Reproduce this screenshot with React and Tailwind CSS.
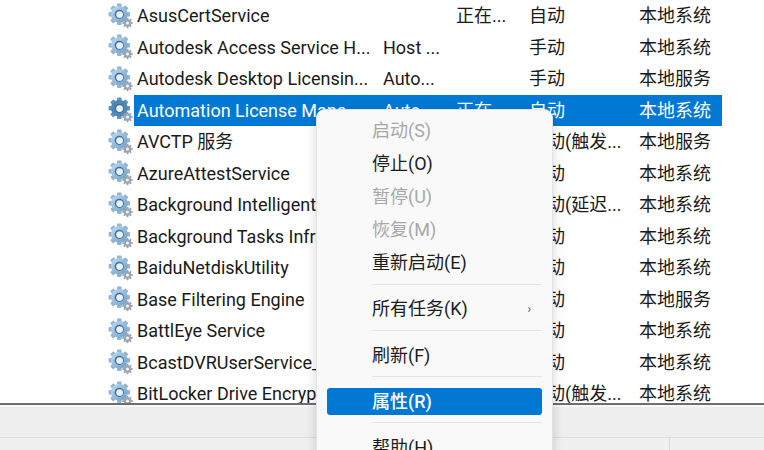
import React from "react";

const services = [
  { name: "AsusCertService", desc: "", status: "正在...", start: "自动", logon: "本地系统" },
  { name: "Autodesk Access Service H...", desc: "Host ...", status: "", start: "手动", logon: "本地系统" },
  { name: "Autodesk Desktop Licensin...", desc: "Auto...", status: "", start: "手动", logon: "本地服务" },
  { name: "Automation License Mana...", desc: "Auto...", status: "正在...", start: "自动", logon: "本地系统", selected: true },
  { name: "AVCTP 服务", desc: "", status: "", start: "手动(触发...", logon: "本地服务" },
  { name: "AzureAttestService", desc: "", status: "", start: "手动", logon: "本地系统" },
  { name: "Background Intelligent Tra...", desc: "", status: "", start: "自动(延迟...", logon: "本地系统" },
  { name: "Background Tasks Infrastr...", desc: "", status: "", start: "自动", logon: "本地系统" },
  { name: "BaiduNetdiskUtility", desc: "", status: "", start: "手动", logon: "本地系统" },
  { name: "Base Filtering Engine", desc: "", status: "", start: "自动", logon: "本地服务" },
  { name: "BattlEye Service", desc: "", status: "", start: "手动", logon: "本地系统" },
  { name: "BcastDVRUserService_", desc: "", status: "", start: "手动", logon: "本地系统" },
  { name: "BitLocker Drive Encryption", desc: "", status: "", start: "手动(触发...", logon: "本地系统" },
];

const teeth = [0, 45, 90, 135, 180, 225, 270, 315];

function GearIcon({ selected }) {
  return (
    <svg width="26" height="26" viewBox="0 0 26 26" className="shrink-0">
      <defs>
        <linearGradient id="gearBlue" x1="0" y1="0" x2="1" y2="1">
          <stop offset="0" stopColor="#c4dbee" />
          <stop offset="1" stopColor="#6a9cc6" />
        </linearGradient>
      </defs>
      {teeth.map((a) => (
        <rect key={a} x="9" y="0.6" width="4.6" height="5" rx="0.8" fill={selected ? "#5f93c0" : "#8fb6d6"} transform={`rotate(${a} 11.3 11.3)`} />
      ))}
      <circle cx="11.3" cy="11.3" r="8.4" fill={selected ? "#4f86b5" : "url(#gearBlue)"} />
      <circle cx="11.3" cy="11.3" r="4.6" fill="#3f709c" />
      <circle cx="11.6" cy="11.6" r="3.4" fill="#e8f1f8" />
      {teeth.map((a) => (
        <rect key={a} x="18.6" y="14.8" width="1.8" height="2.6" fill="#98a4ae" transform={`rotate(${a} 19.5 20)`} />
      ))}
      <circle cx="19.5" cy="20" r="3.7" fill="#9aa6b0" />
      <circle cx="19.5" cy="20" r="1.5" fill="#f3f5f7" />
    </svg>
  );
}

function ServiceRow({ name, desc, status, start, logon, selected }) {
  return (
    <div className="flex items-center h-[31.5px] pl-[108px]">
      <GearIcon selected={selected} />
      <div className={`flex items-center h-full w-[588px] whitespace-nowrap ${selected ? "bg-[#0078d4] text-white" : "text-[#1a1a1a]"}`}>
        <span className="w-[249px] pl-[3px] overflow-hidden">{name}</span>
        <span className="w-[73px]">{desc}</span>
        <span className="w-[73px]">{status}</span>
        <span className="w-[110px] overflow-hidden">{start}</span>
        <span>{logon}</span>
      </div>
    </div>
  );
}

function MenuItem({ label, disabled, active, arrow }) {
  return (
    <div
      className={`flex items-center justify-between h-[27px] mx-[10px] pl-[45px] pr-[11px] rounded-[3px] ${
        active ? "bg-[#0078d4] text-white font-medium" : disabled ? "text-[#a8a8a8]" : "text-[#1c1c1c]"
      }`}
    >
      <span>{label}</span>
      {arrow && <span className="text-[12px] text-[#555]">›</span>}
    </div>
  );
}

function Separator() {
  return <div className="h-px mt-[1.5px] mb-[4.8px] bg-[#e4e4e4] ml-[55px] mr-[11px]" />;
}

export default function App() {
  return (
    <div className="relative h-[450px] w-[764px] overflow-hidden bg-white text-[18px] font-['Roboto','Noto_Sans_CJK_SC',sans-serif]">
      <div className="h-[403px] overflow-hidden">
        {services.map((s) => (
          <ServiceRow key={s.name} {...s} />
        ))}
      </div>

      {/* status area */}
      <div className="h-[2px] bg-[#6e6e6e]" />
      <div className="h-[32px] bg-[#eeeeee] border-t-2 border-[#f8f8f8]" />
      <div className="h-px bg-[#dcdcdc]" />
      <div className="flex h-[12px] bg-[#f0f0f0]">
        <div className="w-[670px] border-r border-[#d8d8d8]" />
      </div>

      {/* context menu */}
      <div className="absolute left-[316px] top-[109px] w-[237px] h-[360px] pt-[7px] bg-[#f9f9f9] border border-[#e2e2e2] rounded-[9px] shadow-[0_4px_12px_rgba(0,0,0,0.16)]">
        <div className="flex flex-col gap-[6px]">
          <MenuItem label="启动(S)" disabled />
          <MenuItem label="停止(O)" />
          <MenuItem label="暂停(U)" disabled />
          <MenuItem label="恢复(M)" disabled />
          <MenuItem label="重新启动(E)" />
          <Separator />
          <MenuItem label="所有任务(K)" arrow />
          <Separator />
          <MenuItem label="刷新(F)" />
          <Separator />
          <MenuItem label="属性(R)" active />
          <Separator />
          <MenuItem label="帮助(H)" />
        </div>
      </div>
    </div>
  );
}
